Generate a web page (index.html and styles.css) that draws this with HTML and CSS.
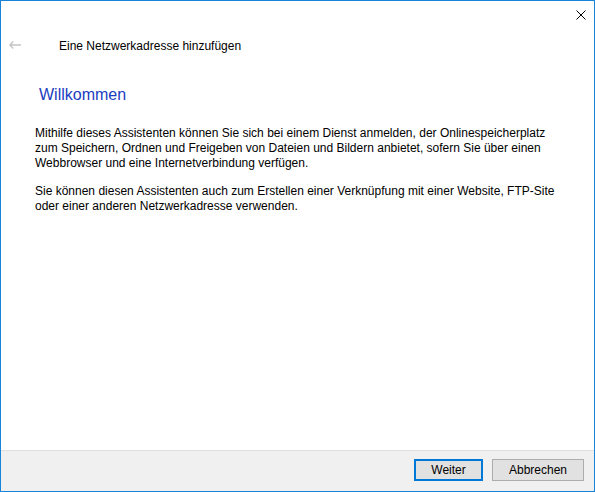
FILE: index.html
```html
<!DOCTYPE html>
<html lang="de">
<head>
    <meta charset="UTF-8">
    <title>Eine Netzwerkadresse hinzufügen</title>
    <link rel="stylesheet" href="styles.css">
</head>
<body>
    <div class="window">
        <div class="titlebar">
            <button class="close-btn" title="Schließen">
                <svg width="10" height="10" viewBox="0 0 10 10">
                    <path d="M0.5 0.5 L9.5 9.5 M9.5 0.5 L0.5 9.5" stroke="#000" stroke-width="1" fill="none"/>
                </svg>
            </button>
        </div>

        <div class="nav">
            <span class="back-btn">
                <svg width="12" height="8" viewBox="0 0 12 8">
                    <path d="M4.2 0.6 L0.9 4 L4.2 7.4 M0.9 4 H12" stroke="#c4c4c4" stroke-width="1.4" fill="none"/>
                </svg>
            </span>
            <span class="nav-title">Eine Netzwerkadresse hinzufügen</span>
        </div>

        <div class="content">
            <h1>Willkommen</h1>
            <p>Mithilfe dieses Assistenten können Sie sich bei einem Dienst anmelden, der Onlinespeicherplatz zum Speichern, Ordnen und Freigeben von Dateien und Bildern anbietet, sofern Sie über einen Webbrowser und eine Internetverbindung verfügen.</p>
            <p>Sie können diesen Assistenten auch zum Erstellen einer Verknüpfung mit einer Website, FTP-Site oder einer anderen Netzwerkadresse verwenden.</p>
        </div>

        <div class="footer">
            <button class="btn btn-default">Weiter</button>
            <button class="btn btn-cancel">Abbrechen</button>
        </div>
    </div>
</body>
</html>
```

FILE: styles.css
```css
* {
    box-sizing: border-box;
}
body {
    margin: 0;
    font-family: 'Liberation Sans', Arial, sans-serif;
    font-size: 12px;
    color: #000;
    background: #fff;
}
.window {
    width: 595px;
    height: 492px;
    border: 1px solid #1883d7;
    background: #fff;
    display: flex;
    flex-direction: column;
}
.titlebar {
    height: 30px;
    display: flex;
    justify-content: flex-end;
    align-items: flex-start;
}
.close-btn {
    width: 27px;
    height: 28px;
    border: none;
    background: transparent;
    padding: 0;
    display: flex;
    align-items: center;
    justify-content: center;
}
.nav {
    height: 30px;
    display: flex;
    align-items: center;
}
.back-btn {
    width: 58px;
    padding-left: 8px;
    margin-top: -3px;
    display: flex;
    align-items: center;
}
.nav-title {
    color: #000;
}
.content {
    padding: 0 38px 0 34px;
}
h1 {
    font-size: 16px;
    font-weight: normal;
    color: #1a3dbf;
    margin: 25px 0 22px 4px;
}
p {
    margin: 0 0 13px 0;
    line-height: 15px;
}
.footer {
    margin-top: auto;
    height: 41px;
    border-top: 1px solid #dfdfdf;
    background: #f0f0f0;
    display: flex;
    justify-content: flex-end;
    align-items: flex-start;
    gap: 9px;
    padding: 8px 10px 0 0;
}
.btn {
    height: 22px;
    font-family: inherit;
    font-size: 12px;
    color: #000;
    background: #e1e1e1;
    border: 1px solid #adadad;
    padding: 0;
}
.btn-default {
    width: 69px;
    border: 2px solid #0078d7;
}
.btn-cancel {
    width: 92px;
}
```
